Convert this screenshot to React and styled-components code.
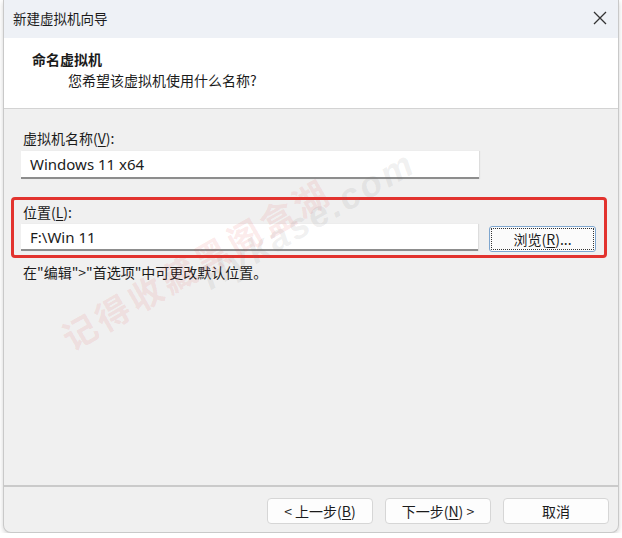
import React from 'react'
import styled, { createGlobalStyle } from 'styled-components'

const GlobalStyle = createGlobalStyle`
  html, body {
    margin: 0;
    padding: 0;
    background: #ffffff;
  }
  body {
    font-family: "Noto Sans", "Noto Sans CJK SC", sans-serif;
    color: #1b1b1b;
  }
`

const StyledWindow = styled.div`
  position: relative;
  box-sizing: border-box;
  margin-left: 3px;
  width: 616px;
  height: 533px;
  display: flex;
  flex-direction: column;
  border: 1px solid #c9c9c9;
  border-top: none;
  border-radius: 0 0 8px 8px;
  box-shadow: 0 2px 5px rgba(0, 0, 0, 0.18);
  overflow: hidden;
  background: #f0f0f0;
`

const StyledTitleBar = styled.div`
  height: 36px;
  display: flex;
  align-items: center;
  justify-content: space-between;
  padding: 0 8px 2px 9px;
  background: #eef1f6;
  font-family: "Noto Sans CJK SC", sans-serif;
  font-size: 13.5px;
`

const StyledClose = styled.div`
  width: 20px;
  height: 20px;
  display: flex;
  align-items: center;
  justify-content: center;
`

const StyledHeader = styled.div`
  height: 71px;
  box-sizing: border-box;
  padding: 11px 0 0 28px;
  background: #ffffff;
  border-bottom: 1px solid #d3d3d3;
  font-family: "Noto Sans CJK SC", sans-serif;
  font-size: 14px;
  line-height: 20px;
`

const StyledHeading = styled.div`
  font-weight: 700;
`

const StyledSubheading = styled.div`
  padding-left: 36px;
  margin-top: 1px;
`

const StyledBody = styled.div`
  flex: 1;
  padding: 19px 0 0 17px;
  font-family: "Noto Sans CJK SC", sans-serif;
  font-size: 14px;
  line-height: 20px;
`

const StyledLabel = styled.div`
  margin-left: 2px;
  u { text-decoration-thickness: 1px; text-underline-offset: 2px; }
`

const StyledInput = styled.div`
  box-sizing: border-box;
  width: 458px;
  height: ${p => p.$h}px;
  margin-top: ${p => p.$top}px;
  display: flex;
  align-items: center;
  padding-left: 9px;
  background: #ffffff;
  border-bottom: 2px solid #8d8d8d;
  box-shadow: 1px 0 1px rgba(0, 0, 0, 0.08);
  font-family: "Noto Sans", sans-serif;
  font-size: 15px;
`

const StyledLocationGroup = styled.div`
  margin: 18px 11px 0 -10px;
  padding: 2px 8px 0 7px;
  height: 53px;
  border: 3px solid #e2332e;
  border-radius: 4px;
`

const StyledRow = styled.div`
  display: flex;
  align-items: flex-start;
  gap: 11px;
`

const StyledBrowse = styled.div`
  box-sizing: border-box;
  width: 107px;
  height: 26px;
  margin-top: 4px;
  display: flex;
  align-items: center;
  justify-content: center;
  background: #fbfbfb;
  border: 1px solid #7ea6cf;
  border-radius: 3px;
  outline: 1px dotted #333;
  outline-offset: -3px;
  u { text-decoration-thickness: 1px; text-underline-offset: 2px; }
`

const StyledHint = styled.div`
  margin: 4px 0 0 2px;
`

const StyledFooter = styled.div`
  height: 47px;
  box-sizing: border-box;
  border-top: 2px solid #cacaca;
  display: flex;
  justify-content: flex-end;
  align-items: flex-start;
  gap: 12px;
  padding: 11px 9px 0 0;
`

const StyledButton = styled.div`
  box-sizing: border-box;
  width: 106px;
  height: 26px;
  display: flex;
  align-items: center;
  justify-content: center;
  background: #fdfdfd;
  border: 1px solid #d6d6d6;
  border-radius: 4px;
  font-family: "Noto Sans CJK SC", sans-serif;
  font-size: 14px;
  u { text-decoration-thickness: 1px; text-underline-offset: 2px; }
`

const StyledWatermark = styled.div`
  position: absolute;
  left: ${p => p.$x}px;
  top: ${p => p.$y}px;
  transform: rotate(-30deg);
  transform-origin: left top;
  white-space: nowrap;
  font-family: ${p => p.$latin ? '"Liberation Sans", sans-serif' : '"Noto Sans CJK SC", sans-serif'};
  font-weight: 700;
  font-style: ${p => p.$latin ? 'italic' : 'normal'};
  font-size: ${p => p.$size}px;
  color: ${p => p.$color};
  letter-spacing: ${p => p.$spacing}px;
  pointer-events: none;
`

const CloseIcon = () => (
  <svg width="14" height="14" viewBox="0 0 14 14">
    <path d="M1 1 L13 13 M13 1 L1 13" stroke="#333" strokeWidth="1.3" fill="none" />
  </svg>
)

const App = () => (
  <>
    <GlobalStyle />
    <StyledWindow>
      <StyledTitleBar>
        <span>新建虚拟机向导</span>
        <StyledClose><CloseIcon /></StyledClose>
      </StyledTitleBar>
      <StyledHeader>
        <StyledHeading>命名虚拟机</StyledHeading>
        <StyledSubheading>您希望该虚拟机使用什么名称?</StyledSubheading>
      </StyledHeader>
      <StyledBody>
        <StyledLabel>虚拟机名称(<u>V</u>):</StyledLabel>
        <StyledInput $h={28} $top={3}>Windows 11 x64</StyledInput>
        <StyledLocationGroup>
          <StyledLabel>位置(<u>L</u>):</StyledLabel>
          <StyledRow>
            <StyledInput $h={27} $top={2}>F:\Win 11</StyledInput>
            <StyledBrowse>浏览(<u>R</u>)...</StyledBrowse>
          </StyledRow>
        </StyledLocationGroup>
        <StyledHint>在"编辑">"首选项"中可更改默认位置。</StyledHint>
      </StyledBody>
      <StyledFooter>
        <StyledButton>&lt; 上一步(<u>B</u>)</StyledButton>
        <StyledButton>下一步(<u>N</u>) &gt;</StyledButton>
        <StyledButton>取消</StyledButton>
      </StyledFooter>
      <StyledWatermark $x={48} $y={318} $size={34} $spacing={4} $color="rgba(226, 60, 60, 0.11)">
        记得收藏黑阁盒湖
      </StyledWatermark>
      <StyledWatermark $x={190} $y={262} $size={36} $spacing={3} $latin $color="rgba(110, 110, 110, 0.10)">
        Hykase.com
      </StyledWatermark>
    </StyledWindow>
  </>
)

export default App
